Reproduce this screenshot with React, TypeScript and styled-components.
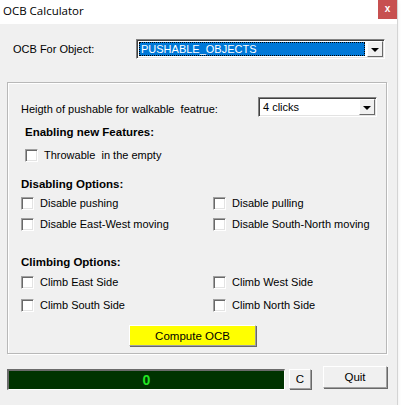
import React from "react";
import styled, { createGlobalStyle } from "styled-components";

const GlobalStyle = createGlobalStyle`
  html, body {
    margin: 0;
    padding: 0;
    background: #ffffff;
  }
  body {
    font-family: "Liberation Sans", Arial, sans-serif;
    font-size: 11px;
    color: #000;
  }
`;

const Window = styled.div`
  width: 398px;
  height: 405px;
  background: #f0f0f0;
  border-right: 1px solid #d4d4d4;
  box-sizing: border-box;
  box-shadow: 0 2px 4px rgba(0, 0, 0, 0.08);
  display: flex;
  flex-direction: column;
`;

const TitleBar = styled.div`
  height: 24px;
  background: #ffffff;
  display: flex;
  align-items: flex-start;
  justify-content: space-between;
`;

const Title = styled.span`
  font-family: "Open Sans", "Noto Sans", sans-serif;
  font-size: 11.5px;
  line-height: 22px;
  padding-left: 3px;
  color: #000;
`;

const CloseButton = styled.div`
  width: 19px;
  height: 19px;
  background: #c75050;
  color: #fff;
  font-family: "Liberation Sans", Arial, sans-serif;
  font-weight: bold;
  font-size: 10px;
  line-height: 18px;
  text-align: center;
`;

const Body = styled.div`
  display: flex;
  flex-direction: column;
  flex: 1;
`;

const TopRow = styled.div`
  margin-top: 15px;
  display: grid;
  grid-template-columns: 123px 249px;
  align-items: center;
  padding-left: 13px;
  height: 20px;
`;

const Label = styled.span`
  font-size: 11px;
  line-height: 16px;
  white-space: nowrap;
`;

const Combo = styled.div<{ $width: number }>`
  width: ${(p) => p.$width}px;
  height: 20px;
  box-sizing: border-box;
  background: #fff;
  border-top: 1px solid #828282;
  border-left: 1px solid #828282;
  border-right: 1px solid #fff;
  border-bottom: 1px solid #fff;
  box-shadow: inset 1px 1px 0 #404040, inset -1px -1px 0 #e3e3e3;
  display: flex;
  align-items: stretch;
  padding: 2px 1px 2px 2px;
`;

const ComboValue = styled.div<{ $selected?: boolean }>`
  flex: 1;
  display: flex;
  align-items: center;
  padding-left: 2px;
  font-size: 11px;
  background: ${(p) => (p.$selected ? "#0078d7" : "transparent")};
  color: ${(p) => (p.$selected ? "#fff" : "#000")};
  outline: ${(p) => (p.$selected ? "1px dotted #000" : "none")};
  outline-offset: -1px;
  margin-right: 2px;
  white-space: nowrap;
  overflow: hidden;
`;

const ComboButton = styled.div`
  width: 16px;
  box-sizing: border-box;
  background: #f0f0f0;
  border-top: 1px solid #fff;
  border-left: 1px solid #fff;
  border-right: 1px solid #696969;
  border-bottom: 1px solid #696969;
  margin: -1px 0 -1px 0;
  display: flex;
  align-items: center;
  justify-content: center;
`;

const Arrow = styled.div`
  width: 0;
  height: 0;
  border-left: 4px solid transparent;
  border-right: 4px solid transparent;
  border-top: 4px solid #000;
  margin-top: 1px;
`;

const GroupBox = styled.div`
  margin: 23px 0 0 7px;
  width: 380px;
  height: 272px;
  box-sizing: border-box;
  border: 1px solid #b8b8b8;
  box-shadow: inset 1px 1px 0 #fff, 1px 1px 0 #fff;
  display: flex;
  flex-direction: column;
`;

const HeightRow = styled.div`
  margin-top: 14px;
  padding-left: 13px;
  display: grid;
  grid-template-columns: 237px 119px;
  align-items: end;
`;

const SectionTitle = styled.div<{ $top: number; $left: number }>`
  margin-top: ${(p) => p.$top}px;
  padding-left: ${(p) => p.$left}px;
  font-weight: bold;
  font-size: 11.5px;
  line-height: 16px;
`;

const CheckGrid = styled.div<{ $top: number; $rowGap: number }>`
  margin-top: ${(p) => p.$top}px;
  padding-left: 13px;
  display: grid;
  grid-template-columns: 192px 180px;
  row-gap: ${(p) => p.$rowGap}px;
`;

const CheckRow = styled.label<{ $top?: number; $left?: number }>`
  margin-top: ${(p) => p.$top ?? 0}px;
  padding-left: ${(p) => p.$left ?? 0}px;
  display: flex;
  align-items: center;
  gap: 6px;
  height: 16px;
  font-size: 11px;
  white-space: nowrap;
`;

const Box = styled.span`
  width: 13px;
  height: 13px;
  box-sizing: border-box;
  background: #fff;
  border-top: 1px solid #a0a0a0;
  border-left: 1px solid #a0a0a0;
  border-right: 1px solid #fff;
  border-bottom: 1px solid #fff;
  box-shadow: inset 1px 1px 0 #696969, inset -1px -1px 0 #e3e3e3;
  flex-shrink: 0;
`;

const Button = styled.div<{ $width: number; $height: number; $bg?: string }>`
  width: ${(p) => p.$width}px;
  height: ${(p) => p.$height}px;
  box-sizing: border-box;
  background: ${(p) => p.$bg ?? "#f0f0f0"};
  border-top: 1px solid #fff;
  border-left: 1px solid #fff;
  border-right: 1px solid #a0a0a0;
  border-bottom: 1px solid #a0a0a0;
  box-shadow: 1px 1px 0 #696969;
  display: flex;
  align-items: center;
  justify-content: center;
  font-size: 11.5px;
  flex-shrink: 0;
`;

const ComputeWrap = styled.div`
  margin-top: 12px;
  padding-left: 121px;
`;

const BottomRow = styled.div`
  margin-top: 12px;
  padding-left: 7px;
  display: flex;
  align-items: flex-start;
`;

const Display = styled.div`
  margin-top: 3px;
  width: 278px;
  height: 21px;
  box-sizing: border-box;
  background: #003300;
  border-top: 2px solid #6b6b6b;
  border-left: 2px solid #6b6b6b;
  border-right: 1px solid #fff;
  border-bottom: 1px solid #fff;
  color: #22e622;
  font-weight: bold;
  font-size: 14px;
  display: flex;
  align-items: center;
  justify-content: center;
`;

const SmallButton = styled(Button)`
  margin: 3px 0 0 4px;
`;

const QuitButton = styled(Button)`
  margin-left: 12px;
`;

const checks = {
  disabling: [
    "Disable pushing",
    "Disable pulling",
    "Disable East-West moving",
    "Disable South-North moving",
  ],
  climbing: [
    "Climb East Side",
    "Climb West Side",
    "Climb South Side",
    "Climb North Side",
  ],
};

export default function App() {
  return (
    <>
      <GlobalStyle />
      <Window>
        <TitleBar>
          <Title>OCB Calculator</Title>
          <CloseButton>x</CloseButton>
        </TitleBar>
        <Body>
          <TopRow>
            <Label>OCB For Object:</Label>
            <Combo $width={249}>
              <ComboValue $selected>PUSHABLE_OBJECTS</ComboValue>
              <ComboButton>
                <Arrow />
              </ComboButton>
            </Combo>
          </TopRow>

          <GroupBox>
            <HeightRow>
              <Label>Heigth of pushable for walkable&nbsp; featrue:</Label>
              <Combo $width={119}>
                <ComboValue>4 clicks</ComboValue>
                <ComboButton>
                  <Arrow />
                </ComboButton>
              </Combo>
            </HeightRow>

            <SectionTitle $top={7} $left={17}>
              Enabling new Features:
            </SectionTitle>
            <CheckRow $top={7} $left={17}>
              <Box />
              Throwable&nbsp; in the empty
            </CheckRow>

            <SectionTitle $top={13} $left={13}>
              Disabling Options:
            </SectionTitle>
            <CheckGrid $top={3} $rowGap={5}>
              {checks.disabling.map((c) => (
                <CheckRow key={c}>
                  <Box />
                  {c}
                </CheckRow>
              ))}
            </CheckGrid>

            <SectionTitle $top={22} $left={13}>
              Climbing Options:
            </SectionTitle>
            <CheckGrid $top={4} $rowGap={7}>
              {checks.climbing.map((c) => (
                <CheckRow key={c}>
                  <Box />
                  {c}
                </CheckRow>
              ))}
            </CheckGrid>

            <ComputeWrap>
              <Button $width={127} $height={21} $bg="#ffff00">
                Compute OCB
              </Button>
            </ComputeWrap>
          </GroupBox>

          <BottomRow>
            <Display>0</Display>
            <SmallButton $width={22} $height={20}>
              C
            </SmallButton>
            <QuitButton $width={64} $height={22}>
              Quit
            </QuitButton>
          </BottomRow>
        </Body>
      </Window>
    </>
  );
}
